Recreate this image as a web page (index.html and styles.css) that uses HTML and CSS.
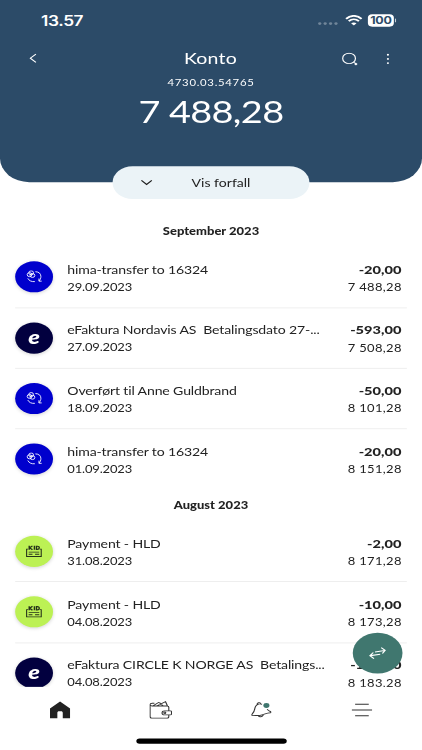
FILE: index.html
```html
<!DOCTYPE html>
<html lang="no">
<head>
<meta charset="utf-8">
<title>Konto</title>
<link rel="stylesheet" href="styles.css">
</head>
<body>
<svg width="0" height="0" class="defs" aria-hidden="true">
  <symbol id="transfer" viewBox="0 0 15 15">
    <g fill="none" stroke="#fff" stroke-width=".9">
      <circle cx="3.3" cy="5.1" r="2.2"/><circle cx="4.8" cy="3" r="2.2"/><circle cx="6" cy="6" r="2.2"/>
      <path d="M8.7 1.8C12 1.8 13.8 4 13.8 7.2c0 1.8-.6 3.6-1.8 5M12 9.4v3h2.5M1.7 9.2c1 2.6 3.4 4.1 6.5 3.7"/>
    </g>
  </symbol>
  <symbol id="kid" viewBox="0 0 15 15">
    <g fill="none" stroke="#26321a" stroke-width="1">
      <path d="M2 5H.6v8.200h13.500V5h-1.400M2.500 8.400h9.800M2.500 10.800H6M8.400 10.800h3.900"/>
      <path d="M3 1.300v4.400M6 1.300 3.400 3.500 6 5.700M7.800 1.300v4.400M9.700 1.700v3.600h.8c2.400 0 2.400-3.600 0-3.600z" stroke-width="1.300"/>
    </g>
  </symbol>
</svg>
<div class="phone">
  <header class="header">
    <div class="status">
      <span class="time">13.57</span>
      <div class="signals">
        <span class="dots"><i></i><i></i><i></i><i></i></span>
        <svg width="16" height="12" viewBox="0 0 16 12" fill="none" stroke="#fff" stroke-width="2"><path d="M.8 4.2C5-.3 11-.3 15.2 4.2M3.3 6.8c2.8-2.7 6.6-2.7 9.4 0"/><path d="M8 11.8 5.5 9.2c1.5-1.3 3.5-1.3 5 0z" fill="#fff" stroke="none"/></svg>
        <span class="battery">100</span>
      </div>
    </div>
    <div class="titlebar">
      <svg class="back" width="7" height="11" viewBox="0 0 7 11" fill="none" stroke="#fff" stroke-width="1.1"><path d="M6.2.8 1 5.500l5.200 4.700"/></svg>
      <h1>Konto</h1>
      <div class="tools">
        <svg width="15" height="15" viewBox="0 0 15 15" fill="none" stroke="#fff" stroke-width="1.1"><circle cx="6.6" cy="6.7" r="5.9"/><path d="m10.8 10.9 1 1"/><path d="m12 12.2 1.7 1.6" stroke-width="2.2"/></svg>
        <svg width="3" height="13" viewBox="0 0 3 13" fill="#fff"><circle cx="1.5" cy="1.6" r="1"/><circle cx="1.5" cy="6.3" r="1"/><circle cx="1.5" cy="11" r="1"/></svg>
      </div>
    </div>
    <div class="number">4730.03.54765</div>
    <div class="balance">7 488,28</div>
    <div class="due"><svg width="11" height="7" viewBox="0 0 11 7" fill="none" stroke="#222" stroke-width="1.2"><path d="m.7 1 4.800 4.600L10.300 1"/></svg><span>Vis forfall</span></div>
  </header>
  <main class="list">
    <h2>September 2023</h2>
    <div class="row"><div class="badge blue"><svg><use href="#transfer"/></svg></div><div class="info"><p>hima-transfer to 16324</p><small>29.09.2023</small></div><div class="sum"><b>-20,00</b><span>7 488,28</span></div></div>
    <div class="row"><div class="badge navy">e</div><div class="info"><p>eFaktura Nordavis AS&nbsp; Betalingsdato 27-...</p><small>27.09.2023</small></div><div class="sum"><b>-593,00</b><span>7 508,28</span></div></div>
    <div class="row"><div class="badge blue"><svg><use href="#transfer"/></svg></div><div class="info"><p>Overført til Anne Guldbrand</p><small>18.09.2023</small></div><div class="sum"><b>-50,00</b><span>8 101,28</span></div></div>
    <div class="row last"><div class="badge blue"><svg><use href="#transfer"/></svg></div><div class="info"><p>hima-transfer to 16324</p><small>01.09.2023</small></div><div class="sum"><b>-20,00</b><span>8 151,28</span></div></div>
    <h2>August 2023</h2>
    <div class="row"><div class="badge lime"><svg><use href="#kid"/></svg></div><div class="info"><p>Payment - HLD</p><small>31.08.2023</small></div><div class="sum"><b>-2,00</b><span>8 171,28</span></div></div>
    <div class="row"><div class="badge lime"><svg><use href="#kid"/></svg></div><div class="info"><p>Payment - HLD</p><small>04.08.2023</small></div><div class="sum"><b>-10,00</b><span>8 173,28</span></div></div>
    <div class="row last"><div class="badge navy">e</div><div class="info"><p>eFaktura CIRCLE K NORGE AS&nbsp; Betalings...</p><small>04.08.2023</small></div><div class="sum"><b>-100,00</b><span>8 183,28</span></div></div>
  </main>
  <nav class="nav">
    <div><svg width="19" height="20" viewBox="0 0 19 20" fill="#222"><path d="M9.5.4 18.8 8.2V19.4H12v-6.2c0-1-.6-1.700-1.500-1.700h-2c-.9 0-1.500.7-1.500 1.700v6.200H.2V8.200z"/></svg></div>
    <div><svg width="21" height="20" viewBox="0 0 21 20" fill="none" stroke="#333" stroke-width="1"><path d="M18 11V7c0-.9-.6-1.500-1.500-1.500H2.500C0 5.200 0 2.600 2.700 2.400h2M.7 4.200v13c0 1.200.8 2 2 2H16c1.200 0 2-.8 2-2V15.500M3.300 5.300 8.600 1.500l2 1M7 5.300l8-4.600 1.800 4.800M9.300 2.500l3.400 2.600M14 11h5.600c.6 0 .9.300.9.900v2.500c0 .7-.4 1.100-1.100 1.100H14c-3 0-3-4.500 0-4.500z"/><circle cx="14.300" cy="13.200" r=".9"/></svg></div>
    <div><svg width="19" height="18" viewBox="0 0 19 18" fill="none" stroke="#333" stroke-width="1"><path d="M10.200 2.500C6.700 1.200 4.200 3.600 3.700 6.400c-.5 3.500-.7 5.200-2.700 7.300-.5.700-.4 1.500.5 1.700 2.300-.4 4.300 0 7.200-.500 3.100-.7 5.700-2.700 9.200-2.800.8-.2.8-1-.1-1.400-1.400-.6-2.200-1.300-2.900-2.700M5.700 2.800C5.300.7 8.200 0 8.900 1.800M6.700 15.500c1 1.800 3.900 1.500 4.700-1"/><circle cx="14.200" cy="4" r="2.800" fill="#3f766e" stroke="none"/></svg></div>
    <div><svg width="19" height="16" viewBox="0 0 19 16" stroke="#333" stroke-width="1.100"><path d="M3.200 1.600h12.600M0 8h19M3.200 14.400h12.600"/></svg></div>
  </nav>
  <div class="home-indicator"></div>
  <div class="fab"><svg width="16" height="14" viewBox="0 0 16 14" fill="none" stroke="#fff" stroke-width="1.200"><path d="M5.600 5.700 14.500 4M11.300.8l3.600 3.100-2.500 3.600M10.400 8.200 1.400 9.800M4 6.300.9 9.900l3.700 3.200"/></svg></div>
</div>
</body>
</html>
```
FILE: styles.css
```css
* { box-sizing: border-box; margin: 0; padding: 0; }
html { height: 750px; overflow: hidden; }
body { width: 422px; height: 750px; overflow: hidden; background: #fff; }
.defs { position: absolute; }
/* The 390x844 layout is fitted to the 422x750 window. */
.phone {
  width: 390px; height: 844px; position: relative; overflow: hidden;
  margin: 0 0 -94px;
  display: flex; flex-direction: column;
  transform: scale(1.08205, .8886); transform-origin: 0 0;
  font-family: Lato, "Liberation Sans", sans-serif; color: #222;
}
.header { height: 205px; flex: none; background: #2c4b68; border-radius: 0 0 27px 27px; color: #fff; display: flex; flex-direction: column; align-items: center; }
.status { width: 100%; height: 45px; padding: 0 24px 0 38px; display: flex; align-items: center; justify-content: space-between; flex: none; }
.time { font: 600 16px Inter, sans-serif; letter-spacing: -.4px; }
.signals { display: flex; align-items: center; }
.signals svg { margin: 0 5px 0 7px; }
.dots { display: flex; gap: 2px; padding-top: 7px; }
.dots i { width: 3px; height: 3px; border-radius: 50%; background: #71869a; }
.battery { width: 24px; height: 14px; line-height: 14px; border-radius: 4px; background: #fff; color: #2c4b68; font-family: Inter, sans-serif; font-weight: 700; font-size: 11.500px; letter-spacing: -.2px; text-align: center; margin-right: 2px; position: relative; }
.battery::after { content: ""; position: absolute; right: -2px; top: 5px; width: 1px; height: 4px; background: #c5ced6; }
.titlebar { width: 100%; height: 42px; padding: 0 30px 0 27px; display: grid; grid-template-columns: 62px 1fr 60px; align-items: center; flex: none; }
.back { margin-top: -2px; }
h1 { font-size: 18px; font-weight: 400; text-align: center; letter-spacing: .2px; position: relative; top: -1px; }
.tools { display: flex; justify-content: flex-end; align-items: center; gap: 26px; }
.number { height: 12px; line-height: 13px; font-size: 10.500px; letter-spacing: .65px; }
.balance { height: 50px; line-height: 51px; font-size: 35px; letter-spacing: -.6px; }
.due { width: 182px; height: 37px; flex: none; margin-top: 38px; background: #ebf3f7; border-radius: 19px; color: #222; display: flex; align-items: center; padding-left: 26px; gap: 36px; font-size: 13px; }
.list { flex: none; height: 567.500px; padding-top: 37.400px; overflow: hidden; }
h2 { height: 36px; line-height: 36.500px; font-size: 12px; font-weight: 900; text-align: center; }
.row { height: 68.200px; margin: 0 14px; padding-right: 5px; border-bottom: 1px solid #ececec; display: flex; align-items: center; }
.row.last { border-bottom-color: transparent; }
.badge { width: 35px; height: 35px; flex: none; border-radius: 50%; margin-right: 13.200px; display: flex; align-items: center; justify-content: center; box-shadow: 0 1px 4px rgba(0,0,0,.18); }
.badge svg { width: 15px; height: 15px; }
.blue { background: #0000cd; }
.navy { background: #02003f; color: #fff; font: italic 900 22px/30px Lato, sans-serif; padding-bottom: 3px; }
.lime { background: #bcf154; }
.info { flex: 1; min-width: 0; white-space: nowrap; padding-top: 3px; }
.info p { font-size: 13px; line-height: 19px; letter-spacing: -.13px; }
.info small { display: block; font-size: 12px; line-height: 19.500px; letter-spacing: -.15px; }
.sum { text-align: right; line-height: 19.500px; white-space: nowrap; padding-top: 3px; }
.sum b { display: block; font-size: 13.500px; font-weight: 900; }
.sum span { display: block; font-size: 12px; letter-spacing: .3px; margin-right: -.3px; }
.nav { height: 53px; flex: none; background: #fff; padding: 0 9.500px; display: grid; grid-template-columns: repeat(4, 1fr); align-items: center; justify-items: center; }
.nav div { display: flex; }
.home-indicator { width: 139px; height: 5.500px; margin: 5.500px auto 0; border-radius: 3px; background: #000; }
.fab { position: absolute; left: 325.700px; top: 712px; width: 46px; height: 46px; border-radius: 50%; background: #40776f; display: flex; align-items: center; justify-content: center; }
```
